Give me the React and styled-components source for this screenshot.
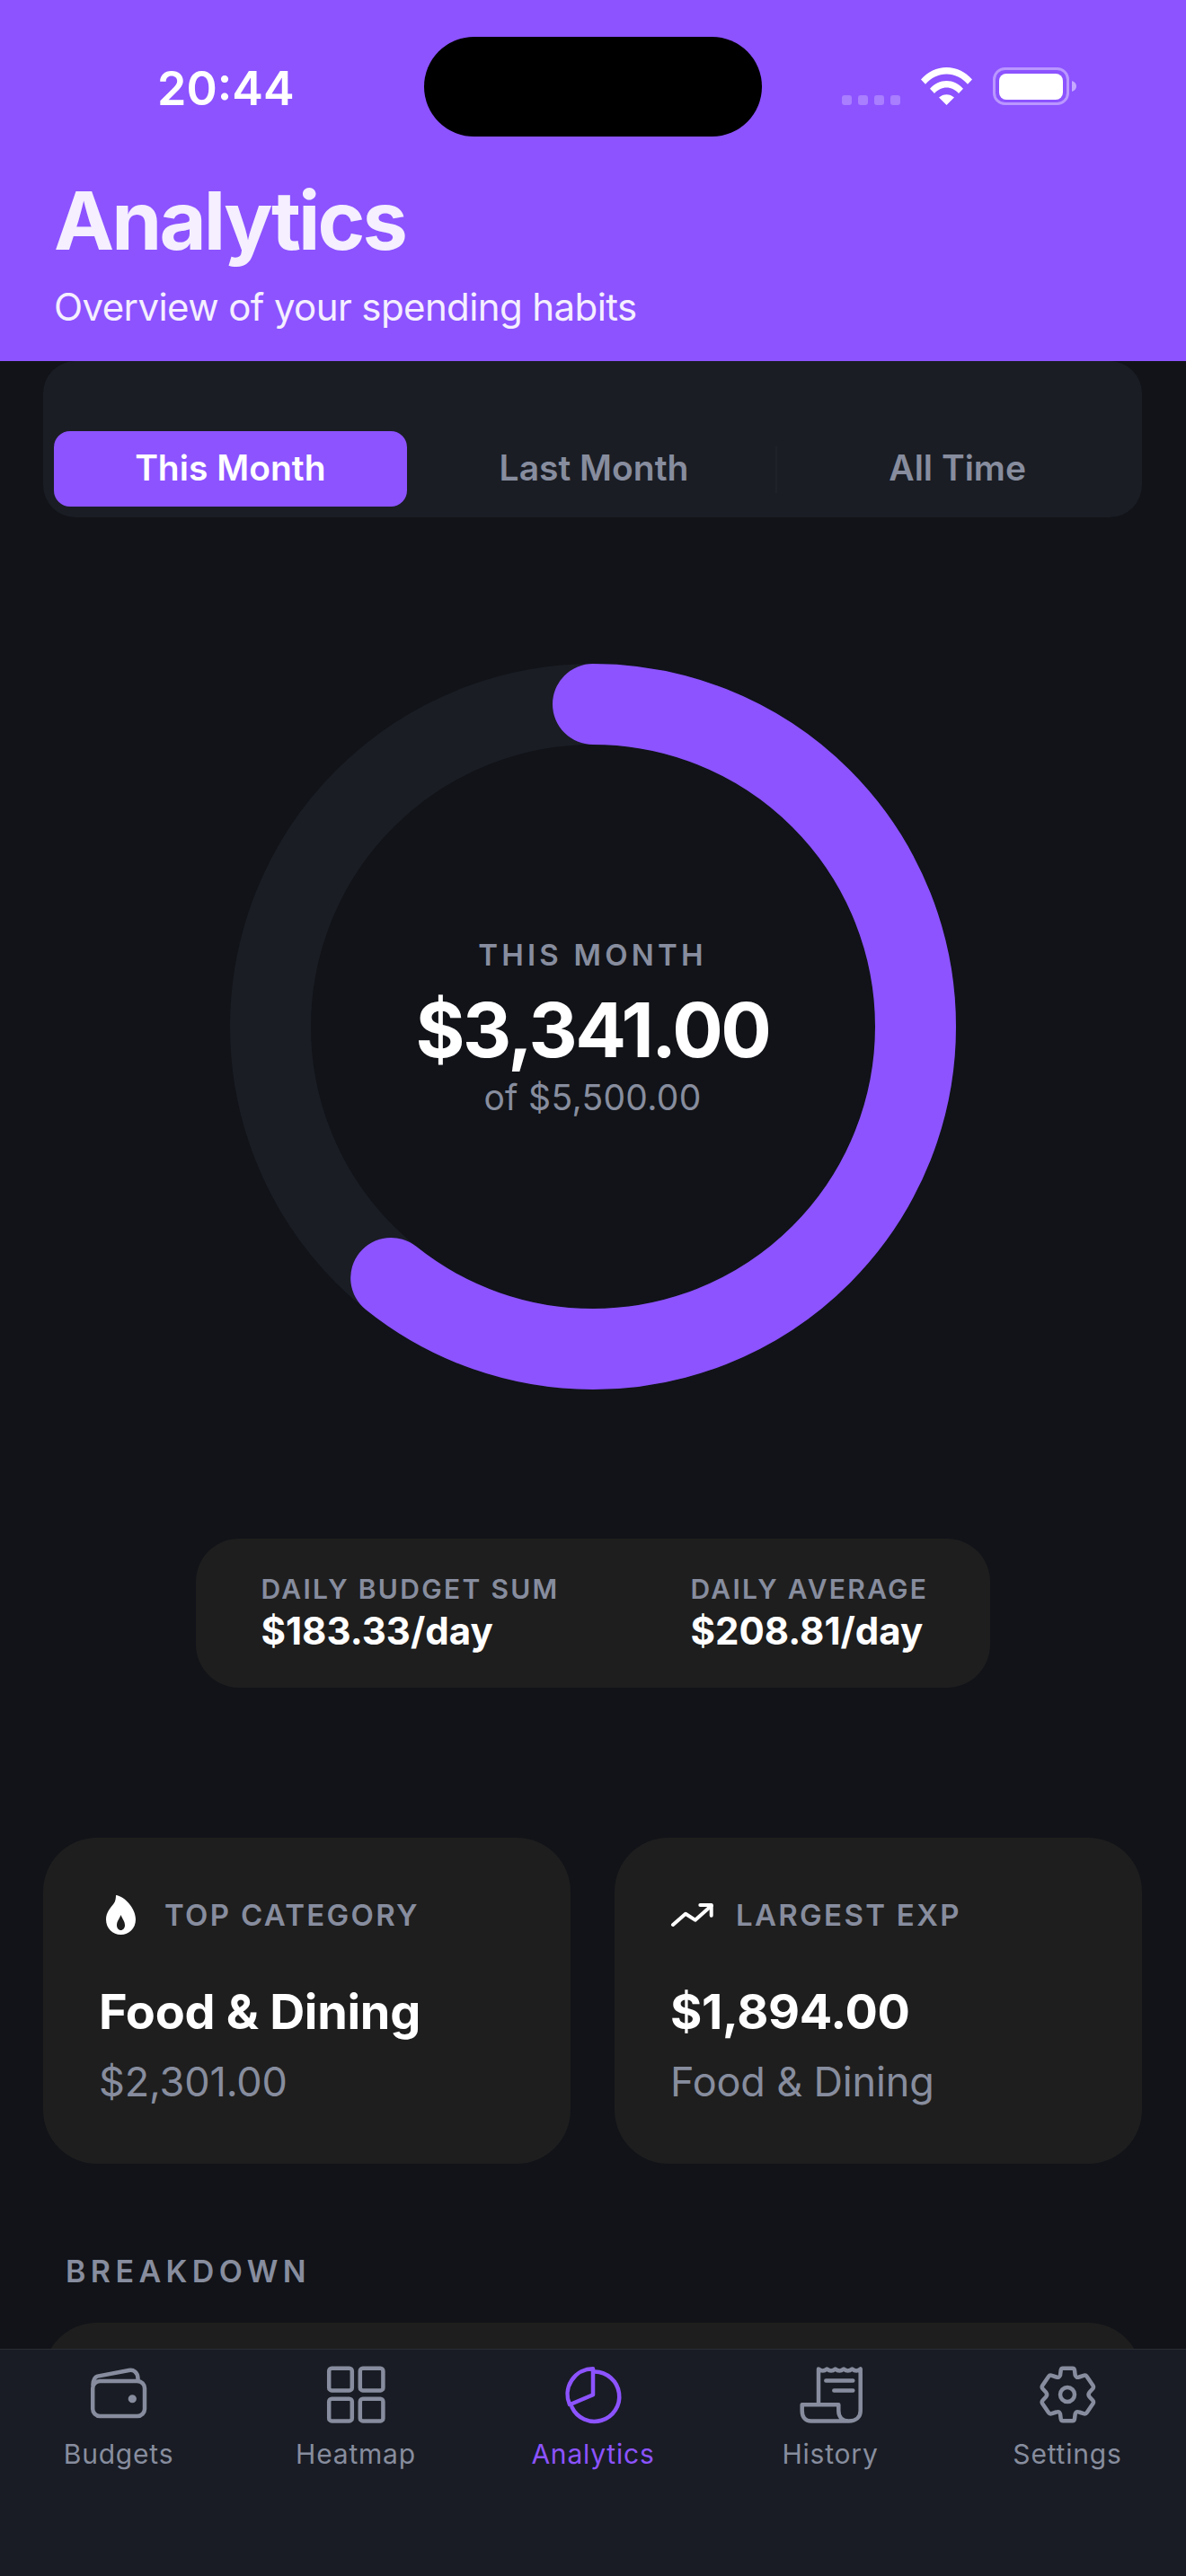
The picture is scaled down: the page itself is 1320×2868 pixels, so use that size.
import React from 'react';
import styled, { createGlobalStyle } from 'styled-components';

const purple = '#8c53ff';
const muted = '#878d9e';

const GlobalStyle = createGlobalStyle`
  html, body {
    margin: 0;
    padding: 0;
    background: #111318;
  }
  * {
    box-sizing: border-box;
  }
`;

const Page = styled.div`
  width: 1320px;
  height: 2868px;
  display: flex;
  flex-direction: column;
  overflow: hidden;
  background: #111318;
  font-family: Inter, "Liberation Sans", sans-serif;
  color: #fff;
`;

const Header = styled.header`
  position: relative;
  z-index: 1;
  flex: none;
  height: 402px;
  padding: 75px 60px 0;
  background: ${purple};
`;

const StatusBar = styled.div`
  height: 42px;
  display: flex;
  justify-content: space-between;
  padding: 0 62px 0 115px;
`;

const Clock = styled.div`
  font-size: 52px;
  font-weight: 600;
  line-height: 48px;
`;

const Island = styled.div`
  position: absolute;
  top: 41px;
  left: 472px;
  width: 376px;
  height: 111px;
  border-radius: 56px;
  background: #000;
`;

const StatusIcons = styled.div`
  display: flex;
  align-items: flex-end;
  gap: 23px;
`;

const SignalDots = styled.div`
  display: flex;
  gap: 7px;
`;

const SignalDot = styled.span`
  width: 11px;
  height: 11px;
  border-radius: 3px;
  background: rgba(255, 255, 255, 0.25);
`;

const Title = styled.h1`
  margin: 79px 0 0;
  font-size: 90px;
  font-weight: 700;
  line-height: 100px;
  letter-spacing: -2.9px;
  color: #f5efff;
`;

const Subtitle = styled.p`
  margin: 21px 0 0;
  font-size: 42px;
  font-weight: 400;
  line-height: 50px;
  letter-spacing: -0.6px;
  color: #f5efff;
`;

const Content = styled.main`
  flex: 1;
  min-height: 0;
  overflow: hidden;
  padding: 0 49px 0 48px;
`;

const TabPanel = styled.div`
  display: grid;
  grid-template-columns: repeat(3, 1fr);
  height: 174px;
  padding: 78px 3px 12px 6px;
  border-radius: 36px;
  background: #1a1d24;
`;

const Tab = styled.div`
  position: relative;
  display: flex;
  align-items: center;
  justify-content: center;
  margin: 0 6px;
  padding-bottom: 3px;
  border-radius: 18px;
  font-size: 39px;
  font-weight: 600;
  background: ${(p) => (p.$active ? purple : 'transparent')};
  color: ${(p) => (p.$active ? '#fff' : muted)};

  ${(p) =>
    p.$divided &&
    `&::before {
      content: '';
      position: absolute;
      left: -6px;
      top: 17px;
      bottom: 15px;
      width: 2px;
      background: #1f2228;
    }`}
`;

const RingWrap = styled.section`
  position: relative;
  width: 808px;
  height: 808px;
  margin: 163px auto 0;
`;

const RingCenter = styled.div`
  position: absolute;
  inset: 0;
  display: flex;
  flex-direction: column;
  align-items: center;
  justify-content: center;
`;

const RingLabel = styled.div`
  font-size: 33px;
  font-weight: 600;
  line-height: 40px;
  letter-spacing: 4.2px;
  color: ${muted};
`;

const RingAmount = styled.div`
  margin-top: 16px;
  font-size: 84px;
  font-weight: 700;
  line-height: 96px;
  letter-spacing: -2.5px;
`;

const RingLimit = styled.div`
  margin-top: 5px;
  font-size: 39px;
  line-height: 44px;
  letter-spacing: 0.3px;
  color: ${muted};
`;

const DailyPill = styled.section`
  display: flex;
  gap: 146px;
  width: 884px;
  height: 166px;
  margin: 166px auto 0;
  padding: 38px 73px;
  border-radius: 48px;
  background: #1e1e1e;
`;

const DailyLabel = styled.div`
  font-size: 30px;
  font-weight: 600;
  line-height: 36px;
  letter-spacing: 2.3px;
  white-space: nowrap;
  color: ${muted};
`;

const DailyValue = styled.div`
  margin-top: 5px;
  font-size: 42px;
  font-weight: 700;
  line-height: 48px;
  white-space: nowrap;
`;

const CardGrid = styled.section`
  display: grid;
  grid-template-columns: 1fr 1fr;
  gap: 49px;
  margin-top: 167px;
`;

const Card = styled.div`
  height: 363px;
  padding: 62px 62px 0;
  border-radius: 60px;
  background: #1e1e1e;
`;

const CardHead = styled.div`
  display: flex;
  align-items: center;
  gap: 25px;
  height: 48px;
`;

const CardIcon = styled.span`
  flex: none;
  display: flex;
  align-items: center;
  justify-content: center;
  width: 48px;
  height: 48px;
`;

const CardLabel = styled.div`
  font-size: 33px;
  font-weight: 600;
  letter-spacing: 2.3px;
  white-space: nowrap;
  color: ${muted};
`;

const CardTitle = styled.div`
  margin-top: 54px;
  font-size: 54px;
  font-weight: 700;
  line-height: 60px;
  letter-spacing: -0.3px;
`;

const CardSub = styled.div`
  margin-top: 22px;
  font-size: 45px;
  line-height: 52px;
  letter-spacing: -0.15px;
  color: ${muted};
`;

const SectionLabel = styled.h2`
  margin: 100px 0 0 25px;
  font-size: 34px;
  font-weight: 600;
  line-height: 40px;
  letter-spacing: 5.4px;
  color: ${muted};
`;

const BreakdownCard = styled.div`
  height: 300px;
  margin-top: 37px;
  border-radius: 60px;
  background: #1e1e1e;
`;

const TabBar = styled.nav`
  flex: none;
  display: grid;
  grid-template-columns: repeat(5, 1fr);
  height: 253px;
  padding-top: 14px;
  border-top: 1px solid #2a2d34;
  background: #191c24;
`;

const NavItem = styled.div`
  display: flex;
  flex-direction: column;
  align-items: center;
  color: ${(p) => (p.$active ? purple : muted)};
`;

const NavLabel = styled.span`
  margin-top: 10px;
  font-size: 30px;
  line-height: 40px;
  letter-spacing: 0.8px;
`;

const NavIcon = ({ children }) => (
  <svg
    width="72"
    height="72"
    viewBox="0 0 72 72"
    fill="none"
    stroke="currentColor"
    strokeWidth="4.5"
    strokeLinecap="round"
    strokeLinejoin="round"
  >
    {children}
  </svg>
);

const WalletIcon = () => (
  <NavIcon>
    <rect x="7.2" y="21" width="57.8" height="39" rx="8" />
    <path d="M7.5 25c.3-4.5 2-8.6 5-9.4L47.5 9c5-1 9.6 2 10 9v3" />
    <ellipse cx="51.3" cy="40.8" rx="2.4" ry="2.2" fill="currentColor" />
  </NavIcon>
);

const HeatmapIcon = () => (
  <NavIcon>
    <rect x="6.2" y="6.8" width="25.6" height="24.6" rx="3" />
    <rect x="40.8" y="6.8" width="25.6" height="24.6" rx="3" />
    <rect x="6.2" y="40.8" width="25.6" height="24.6" rx="3" />
    <rect x="40.8" y="40.8" width="25.6" height="24.6" rx="3" />
  </NavIcon>
);

const AnalyticsIcon = () => (
  <NavIcon>
    <path d="M36 7.2V36.2L10 47.2A28.5 28.5 0 0 1 36 7.2Z" />
    <path d="M38 10.5A27.7 27.7 0 1 1 12.5 50" />
  </NavIcon>
);

const HistoryIcon = () => (
  <NavIcon>
    <path d="M23 45.5V7.5q4.67 4 9.34 0q4.67 4 9.34 0q4.67 4 9.34 0q4.67 4 9.34 0q4.67 4 9.34 0V54c0 7-5 11.5-13 11.5S45.3 60 45.3 54v-6.8H4.7V54c0 7 3.5 11.5 10 11.5H56" />
    <path d="M31.3 20.5H61.3M40.3 31.5H61.3" />
  </NavIcon>
);

const SettingsIcon = () => (
  <NavIcon>
    <path d="M31 6.7H41.7Q43.7 6.7 44 9L44.7 14.5Q46 17.8 49 16.5L54 14.8Q56.4 14 57.7 16L64.5 26Q65.7 28 64 29.8L60.5 33.5Q58.6 36 60.5 38.5L64 42.2Q65.7 44 64.5 46L57.7 56Q56.4 58 54 57.2L49 55.5Q46 54.2 44.7 57.5L44 63Q43.7 65.3 41.7 65.3H31Q29 65.3 28.7 63L28 57.5Q26.7 54.2 23.7 55.5L18.7 57.2Q16.3 58 15 56L8.2 46Q7 44 8.7 42.2L12.2 38.5Q14.1 36 12.2 33.5L8.7 29.8Q7 28 8.2 26L15 16Q16.3 14 18.7 14.8L23.7 16.5Q26.7 17.8 28 14.5L28.7 9Q29 6.7 31 6.7Z" />
    <circle cx="36" cy="36" r="8" />
  </NavIcon>
);

const FlameIcon = () => (
  <svg width="33" height="44" viewBox="0 0 33 44">
    <path
      fill="#fff"
      fillRule="evenodd"
      d="M11 0C20 1 33 14 33 27C33 37 25.5 44 16.5 44C7.5 44 0 37 0 27C0 19 5 14 8.5 9.5C10.5 7 11 3 11 0ZM16.5 22C14.5 27 12 29 12 33.5C12 36.5 14 39 16.5 39C19 39 21 36.5 21 33.5C21 29 18.5 27 16.5 22Z"
    />
  </svg>
);

const TrendIcon = () => (
  <svg width="48" height="32" viewBox="15 16 48 32" fill="none" stroke="#fff" strokeWidth="4" strokeLinecap="round" strokeLinejoin="round">
    <path d="M18 43L32 30.7L42.7 37.7L60.7 21.7" />
    <path d="M48.3 21H60.7V32.7" />
  </svg>
);

const WifiIcon = () => (
  <svg width="57" height="42" viewBox="0 0 57 42" fill="#fff">
    <path d="M0 13.5C7.5 4.8 17.5 0 28.5 0S49.5 4.8 57 13.5L52 18.7C45.8 11.5 37.5 7.4 28.5 7.4S11.2 11.5 5 18.7Z" />
    <path d="M10 23.7C15 18.2 21.5 15 28.5 15S42 18.2 47 23.7L42 29C38.3 25 33.6 22.5 28.5 22.5S18.7 25 15 29Z" />
    <path d="M20 33.6C22.5 31.5 25.4 30.3 28.5 30.3S34.5 31.5 37 33.6L28.5 42Z" />
  </svg>
);

const BatteryIcon = () => (
  <svg width="93" height="42" viewBox="0 0 93 42">
    <rect x="1.5" y="1.5" width="82" height="39" rx="12" fill="none" stroke="#fff" strokeOpacity="0.4" strokeWidth="3" />
    <rect x="7" y="7" width="71" height="29" rx="8" fill="#fff" />
    <path d="M88 15C91 16 93 18 93 21S91 26 88 27Z" fill="#fff" fillOpacity="0.5" />
  </svg>
);

// spent / budget drives how far the purple arc runs
const spent = 3341;
const budget = 5500;
const ringRadius = 359;
const ringLength = 2 * Math.PI * ringRadius;

const SpendRing = () => (
  <svg width="808" height="808" viewBox="0 0 808 808">
    <circle cx="404" cy="404" r={ringRadius} fill="none" stroke="#1a1d24" strokeWidth="90" />
    <circle
      cx="404"
      cy="404"
      r={ringRadius}
      fill="none"
      stroke={purple}
      strokeWidth="90"
      strokeLinecap="round"
      strokeDasharray={`${(ringLength * spent) / budget} ${ringLength}`}
      transform="rotate(-90 404 404)"
    />
  </svg>
);

const navItems = [
  { label: 'Budgets', Icon: WalletIcon },
  { label: 'Heatmap', Icon: HeatmapIcon },
  { label: 'Analytics', Icon: AnalyticsIcon, active: true },
  { label: 'History', Icon: HistoryIcon },
  { label: 'Settings', Icon: SettingsIcon },
];

const App = () => (
  <Page>
    <GlobalStyle />
    <Header>
      <StatusBar>
        <Clock>20:44</Clock>
        <Island />
        <StatusIcons>
          <SignalDots>
            <SignalDot />
            <SignalDot />
            <SignalDot />
            <SignalDot />
          </SignalDots>
          <WifiIcon />
          <BatteryIcon />
        </StatusIcons>
      </StatusBar>
      <Title>Analytics</Title>
      <Subtitle>Overview of your spending habits</Subtitle>
    </Header>

    <Content>
      <TabPanel>
        <Tab $active>This Month</Tab>
        <Tab>Last Month</Tab>
        <Tab $divided>All Time</Tab>
      </TabPanel>

      <RingWrap>
        <SpendRing />
        <RingCenter>
          <RingLabel>THIS MONTH</RingLabel>
          <RingAmount>$3,341.00</RingAmount>
          <RingLimit>of $5,500.00</RingLimit>
        </RingCenter>
      </RingWrap>

      <DailyPill>
        <div>
          <DailyLabel>DAILY BUDGET SUM</DailyLabel>
          <DailyValue>$183.33/day</DailyValue>
        </div>
        <div>
          <DailyLabel>DAILY AVERAGE</DailyLabel>
          <DailyValue>$208.81/day</DailyValue>
        </div>
      </DailyPill>

      <CardGrid>
        <Card>
          <CardHead>
            <CardIcon>
              <FlameIcon />
            </CardIcon>
            <CardLabel>TOP CATEGORY</CardLabel>
          </CardHead>
          <CardTitle>Food &amp; Dining</CardTitle>
          <CardSub>$2,301.00</CardSub>
        </Card>
        <Card>
          <CardHead>
            <CardIcon>
              <TrendIcon />
            </CardIcon>
            <CardLabel>LARGEST EXP</CardLabel>
          </CardHead>
          <CardTitle>$1,894.00</CardTitle>
          <CardSub>Food &amp; Dining</CardSub>
        </Card>
      </CardGrid>

      <SectionLabel>BREAKDOWN</SectionLabel>
      <BreakdownCard />
    </Content>

    <TabBar>
      {navItems.map(({ label, Icon, active }) => (
        <NavItem key={label} $active={active}>
          <Icon />
          <NavLabel>{label}</NavLabel>
        </NavItem>
      ))}
    </TabBar>
  </Page>
);

export default App;
